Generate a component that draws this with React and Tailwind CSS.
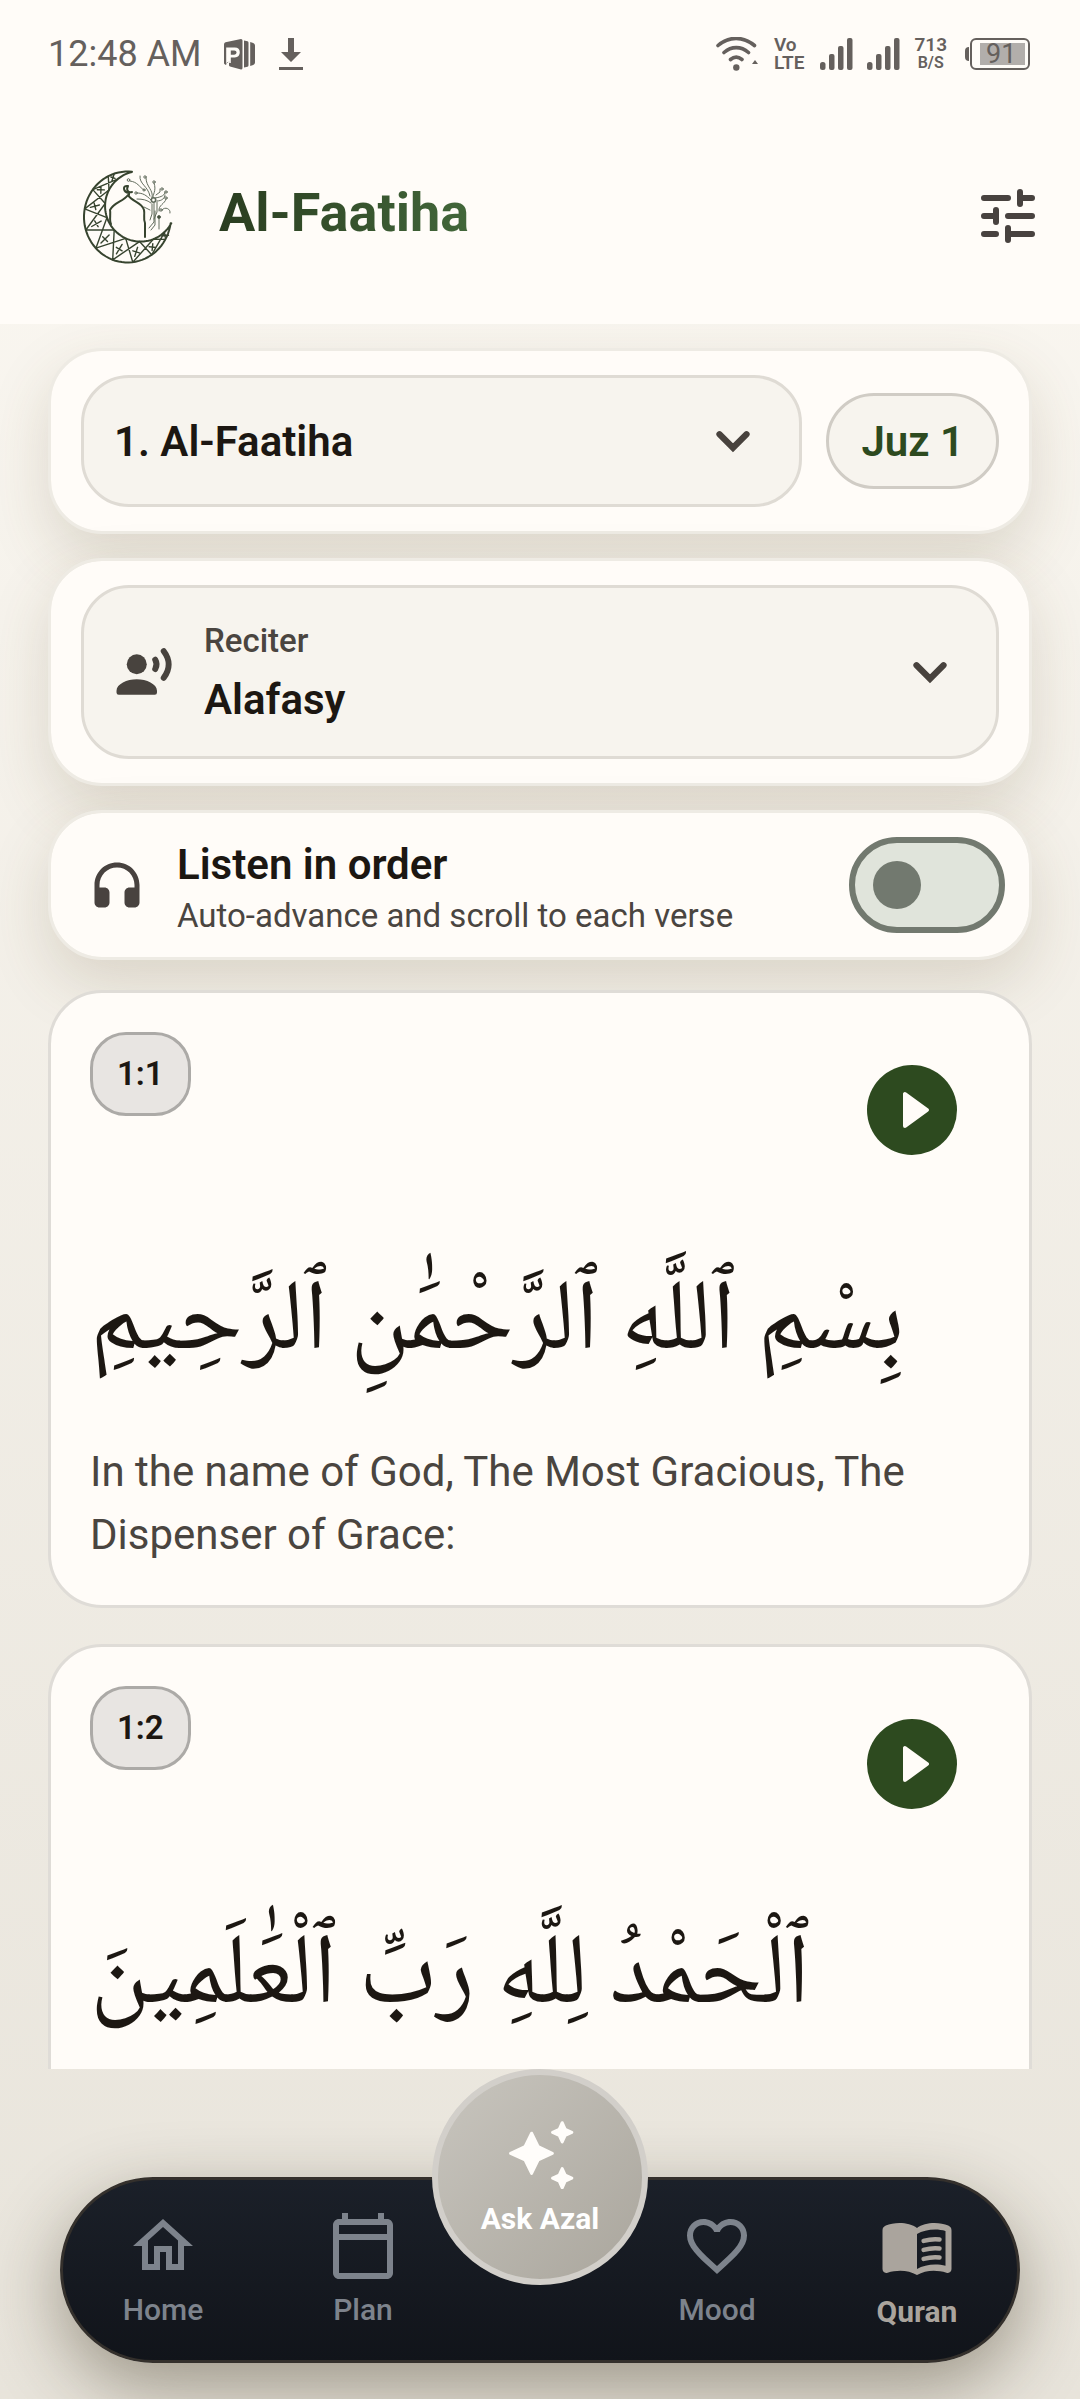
import React from "react";

const surahs = ["1. Al-Faatiha"];
const reciters = ["Alafasy"];

const verses = [
  {
    id: "1:1",
    arabic: "بِسْمِ ٱللَّهِ ٱلرَّحْمَٰنِ ٱلرَّحِيمِ",
    translation: "In the name of God, The Most Gracious, The Dispenser of Grace:",
  },
  { id: "1:2", arabic: "ٱلْحَمْدُ لِلَّهِ رَبِّ ٱلْعَٰلَمِينَ" },
];

function Signal() {
  return (
    <svg viewBox="0 0 33 32" className="h-8 w-[33px]" fill="currentColor" aria-hidden="true">
      <rect x="0" y="24" width="5.5" height="8" rx="2.5" />
      <rect x="9" y="16" width="5.5" height="16" rx="2" />
      <rect x="18" y="8" width="5.5" height="24" rx="2" />
      <rect x="27" y="0" width="5.5" height="32" rx="2" />
    </svg>
  );
}

function StatusBar() {
  return (
    <div className="flex h-[108px] items-center pr-[50px] pl-12 text-[#65605d]">
      <span className="text-4xl">12:48 AM</span>
      <svg viewBox="0 0 31 31" className="ml-[22px] h-[31px] w-[31px]" aria-hidden="true">
        <path fill="currentColor" fillRule="evenodd" d="M17 0q1.500 0 1.500 1.500v27.500q0 1.500-1.500 1.500l-11-3q-1-.3-1-1.200v-3.300h-1.800q-.7 2-1.200 3-1-.5-2-1.500v-19q0-1.600 1.500-2.200zM2.200 8.500v16l3-2V24h1.600v-5.500h4q5-.4 5-5.200 0-4.800-5-4.800zM6.800 11.500h3.400q2.400.2 2.400 2.100 0 2-2.400 2.200H6.800z" />
        <path fill="currentColor" d="M20 1.500l3.500.8q1 .3 1 1.500v22.500q0 1.200-1 1.500l-3.500.8zM26.200 3l3 1q1.800.7 1.800 2.500v17q0 1.800-1.800 2.500l-3 1z" />
      </svg>
      <svg viewBox="0 0 24 32" className="ml-6 h-8 w-6" fill="currentColor" aria-hidden="true">
        <path d="M9 0h6v14h7L12 24 2 14h7zM0 29h24v3H0z" />
      </svg>
      <svg viewBox="0 0 42 34" className="ml-auto h-[34px] w-[42px]" fill="none" stroke="currentColor" strokeWidth="3.600" strokeLinecap="round" aria-hidden="true">
        <path d="M2 8.500C13-1 27-1 38.500 8.500M8 15.500c7.500-6.500 17-6.500 24.500 0M14.500 22.500c3.800-3.200 7.500-3.200 11.500 0" />
        <circle cx="20.300" cy="30.500" r="3.200" fill="currentColor" stroke="none" />
        <path d="M36 27l3-4 3 4z" fill="currentColor" stroke="none" />
      </svg>
      <div className="ml-4 flex flex-col text-[19px] leading-[18px] font-semibold">
        <span>Vo</span>
        <span>LTE</span>
      </div>
      <div className="ml-4 flex gap-3.5">
        <Signal />
        <Signal />
      </div>
      <div className="ml-3.5 flex flex-col items-center font-semibold">
        <span className="text-[19px] leading-[18px]">713</span>
        <span className="text-base leading-[18px]">B/S</span>
      </div>
      <div className="ml-[18px] flex items-center">
        <div className="h-3.5 w-1 rounded-l bg-[#65605d]" />
        <div className="ml-px flex h-8 w-[60px] items-center rounded-md border-2 border-[#65605d]">
          <div className="ml-2 flex h-[22px] w-[45px] items-center bg-[#b2aeab] pl-1.5 text-[27px] leading-none">91</div>
        </div>
      </div>
    </div>
  );
}

/* Crescent geometry: a point on the outer or inner edge at position s (0 = top tip, 1 = right tip). */
const rad = Math.PI / 180;
function outer(s) {
  const a = (-84 - 268 * s) * rad;
  return [57.5 + 43.5 * Math.cos(a), 58 + 45.5 * Math.sin(a)];
}
function inner(s) {
  const a = (-107 - 221 * s) * rad;
  const r = 34.5 + 2.8 * Math.sin(Math.PI * s);
  return [72 + r * Math.cos(a), 46 + r * Math.sin(a)];
}
const line = (p, q) => "M" + p[0].toFixed(1) + " " + p[1].toFixed(1) + "L" + q[0].toFixed(1) + " " + q[1].toFixed(1);
const edge = (f) => Array.from({ length: 61 }, (_, i) => f(i / 60)).map((p, i) => (i ? "L" : "M") + p[0].toFixed(1) + " " + p[1].toFixed(1)).join("");

function lattice() {
  const stops = [0.12, 0.22, 0.32, 0.42, 0.52, 0.62, 0.72, 0.82, 0.92];
  let d = "";
  stops.forEach((s, i) => {
    const next = stops[i + 1];
    if (next) d += line(outer(s), inner(next)) + line(inner(s), outer(next));
    const o = outer(s);
    const n = inner(s);
    const at = (k) => [o[0] + (n[0] - o[0]) * k, o[1] + (n[1] - o[1]) * k];
    const m = at(0.5);
    const len = Math.hypot(n[0] - o[0], n[1] - o[1]);
    const u = [(-(n[1] - o[1]) / len) * 3.4, ((n[0] - o[0]) / len) * 3.4];
    d += line(at(0.28), at(0.72)) + line([m[0] - u[0], m[1] - u[1]], [m[0] + u[0], m[1] + u[1]]);
  });
  return d;
}

function Logo() {
  return (
    <svg viewBox="0 0 120 120" className="mt-1.5 h-[120px] w-[120px]" fill="none" stroke="#37442f" strokeWidth="1.400" strokeLinecap="round" strokeLinejoin="round" role="img" aria-label="Azal">
      <path strokeWidth="2" d={edge(outer) + edge(inner)} />
      <path d={lattice()} />
      <path strokeWidth="2" d="M41 65c-2-4 0-10-1-14 4-8 13-8 18-15 4 7 14 7 16 15 1 5-1 8 1 13v14M59 36v-2c-6-1-7-8-1-7-2 4 0 7 4 6" />
      <g stroke="#626c5d" strokeWidth="1">
        <circle cx="83.500" cy="41" r="2.200" strokeWidth="1.600" />
        <circle cx="58.500" cy="21" r="1.300" />
        <path d="M60 22c8 1 9 6 14 9" />
        <circle cx="74" cy="31" r="1.100" />
        <path d="M70 17c-1 8 8 10 10 20M76 19c0 9 8 12 6 20M84 24c3 8-2 12-1 15M86 36l4-3v-3M85 39c7-1 10-3 10-6M87 42c5 0 8-3 8-6M81 41c-5-5-8-7-14-7M81 44c-4-3-8-4-14-4M84 44v19l-5 6M82 45v10l-2 6M80 51l-6-3M87 43v10l-3 7M96 40c-1 5-8 6-7 12M92 51c3-4 9-1 8 3M81 71l4-5V52" />
        <circle cx="75" cy="18" r="1.200" />
        <circle cx="84" cy="23" r="1.200" />
        <circle cx="92" cy="30" r="1.200" />
        <circle cx="96" cy="33" r="1.200" />
        <circle cx="66" cy="34" r="1.200" />
        <circle cx="96" cy="39" r="1.200" />
        <circle cx="91" cy="51" r="1.200" />
        <path d="M89 58v12" />
        <circle cx="89" cy="58" r="1.500" fill="#37442f" />
      </g>
    </svg>
  );
}

function Chevron() {
  return (
    <svg viewBox="0 0 24 24" className="pointer-events-none h-[60px] w-[60px] shrink-0" fill="none" stroke="#48423d" strokeWidth="2.500" strokeLinecap="round" aria-hidden="true">
      <path d="M6.600 9.300l5.400 5.400 5.400-5.400" />
    </svg>
  );
}

function Panel({ className, children }) {
  return (
    <section className={"flex items-center rounded-[54px] border-[3px] border-[#eeebe4] bg-[#fffcf8] bg-clip-padding shadow-[0_24px_60px_rgba(92,78,44,0.17)] " + className}>
      {children}
    </section>
  );
}

function Verse({ verse }) {
  return (
    <article className="rounded-[54px] border-[3px] border-[#dfdcd7] bg-[#fffcf8] p-[39px]">
      <div className="flex h-[156px] items-start justify-between">
        <span className="flex h-[84px] items-center rounded-[36px] border-[3px] border-[#acaaa7] bg-[#e8e5e2] px-6 text-[33px] font-semibold text-[#1c1712]">{verse.id}</span>
        <button type="button" aria-label={"Play " + verse.id} className="mt-[33px] mr-[33px] flex h-[90px] w-[90px] items-center justify-center rounded-full bg-[#2d4a1f]">
          <svg viewBox="0 0 90 90" className="h-[90px] w-[90px]" fill="#fffcf8" stroke="#fffcf8" strokeWidth="4" strokeLinejoin="round" aria-hidden="true">
            <path d="M38 29v32l22-16z" />
          </svg>
        </button>
      </div>
      <p dir="rtl" lang="ar" className="flex h-[252px] items-center justify-end pt-6 font-['Noto_Naskh_Arabic','Noto_Sans_Arabic',serif] text-[100px] whitespace-nowrap text-[#1c1712]">{verse.arabic}</p>
      {verse.translation && <p className="text-[42px] leading-[63px] text-[#4a4540]">{verse.translation}</p>}
    </article>
  );
}

function NavItem({ label, active, children }) {
  return (
    <a href={"#" + label.toLowerCase()} aria-current={active ? "page" : undefined} className={active ? "flex flex-1 flex-col items-center text-[#aaa49d]" : "flex flex-1 flex-col items-center text-[#7d838c]"}>
      <svg viewBox="0 0 24 24" className="h-[72px] w-[72px] overflow-visible" fill="currentColor" aria-hidden="true">{children}</svg>
      <span className={active ? "mt-3 text-3xl leading-9 font-bold" : "mt-2.5 text-3xl leading-9 font-medium"}>{label}</span>
    </a>
  );
}

export default function App() {
  return (
    <div className="flex h-screen flex-col overflow-hidden bg-linear-to-b from-[#fbf8f2] to-[#e8e4db] font-[Roboto,sans-serif]">
      <header className="shrink-0 bg-[#fffcf8]">
        <StatusBar />
        <div className="flex h-[216px] items-center pr-9 pl-[70px]">
          <Logo />
          <h1 className="ml-[29px] bg-linear-to-r from-[#2a3d20] to-[#42673a] bg-clip-text pb-1.5 text-[54px] leading-[60px] font-bold text-transparent">Al-Faatiha</h1>
          <button type="button" aria-label="Reading settings" className="ml-auto">
            <svg viewBox="0 0 24 24" className="h-[72px] w-[72px]" fill="none" stroke="#48423f" strokeWidth="2" strokeLinecap="round" aria-hidden="true">
              <path d="M4 6h8M17 6h3M16 4v4M4 12h4M12 12h8M8 10v4M4 18h4M12 18h8M12 16v4" />
              <path stroke="#fffcf8" strokeLinecap="butt" d="M14 4v4M10 10v4M10 16v4" />
            </svg>
          </button>
        </div>
      </header>

      <main className="min-h-0 flex-1 overflow-hidden px-12 pt-6">
        <div className="flex flex-col gap-6">
          <Panel className="gap-6 px-[30px] py-6">
            <div className="flex h-[132px] flex-1 items-center rounded-[48px] border-[3px] border-[#dfdbd4] bg-[#f7f4ee] pr-9 pl-[30px]">
              <select aria-label="Surah" className="h-full flex-1 appearance-none bg-transparent text-[42px] font-semibold text-[#1c1712]">
                {surahs.map((s) => <option key={s}>{s}</option>)}
              </select>
              <Chevron />
            </div>
            <button type="button" className="h-24 rounded-full border-[3px] border-[#d0ccc5] bg-[#f7f4ee] px-8 text-[42px] font-semibold text-[#2d4a1f]">Juz 1</button>
          </Panel>

          <Panel className="px-[30px] py-6">
            <div className="flex h-[174px] flex-1 items-center rounded-[48px] border-[3px] border-[#dfdbd4] bg-[#f7f4ee] pr-9 pl-[30px]">
              <svg viewBox="0 0 24 24" className="h-[60px] w-[60px]" fill="#48433e" aria-hidden="true">
                <circle cx="9.100" cy="8.900" r="4" />
                <path d="M9.100 14.900C5.200 14.900 1 16.800 1 19.500v.7q0 .9.900.9h14.400q.9 0 .9-.9v-.7c0-2.700-4.200-4.600-8.100-4.600z" />
                <path fill="none" stroke="#48433e" strokeWidth="2.400" strokeLinecap="round" d="M16.500 7.100c.7 1.200.7 2.500 0 3.700M19.900 3.700c2.600 3.400 2.600 7.200 0 10.600" />
              </svg>
              <div className="ml-[30px] flex flex-1 flex-col gap-0.5">
                <label htmlFor="reciter" className="text-[33px] leading-[54px] font-medium text-[#4a4540]">Reciter</label>
                <select id="reciter" className="appearance-none bg-transparent text-[42px] leading-[60px] font-semibold text-[#1c1712]">
                  {reciters.map((r) => <option key={r}>{r}</option>)}
                </select>
              </div>
              <Chevron />
            </div>
          </Panel>

          <Panel className="h-[150px] pr-6 pl-9">
            <svg viewBox="0 0 24 24" className="h-[60px] w-[60px]" fill="#48423f" aria-hidden="true">
              <path d="M12 3c-5 0-9 4-9 9v7c0 1.100.9 2 2 2h2c1.100 0 2-.9 2-2v-4c0-1.100-.9-2-2-2H5v-1c0-3.900 3.100-7 7-7s7 3.100 7 7v1h-2c-1.100 0-2 .9-2 2v4c0 1.100.9 2 2 2h2c1.100 0 2-.9 2-2v-7c0-5-4-9-9-9z" />
            </svg>
            <label htmlFor="listen" className="ml-[30px] flex flex-1 flex-col pt-2">
              <span className="text-[42px] leading-[54px] font-semibold text-[#1c1712]">Listen in order</span>
              <span className="text-[33px] leading-[48px] text-[#4a4540]">Auto-advance and scroll to each verse</span>
            </label>
            <input id="listen" type="checkbox" role="switch" className="flex h-24 w-[156px] appearance-none items-center rounded-full border-[6px] border-[#72796f] bg-[#e0e4db] pl-[18px] before:h-12 before:w-12 before:rounded-full before:bg-[#72796f] before:content-['']" />
          </Panel>
        </div>

        <div className="relative mt-[30px] flex flex-col gap-9">
          {verses.map((v) => <Verse key={v.id} verse={v} />)}
        </div>
      </main>

      <footer className="shrink-0 px-[60px] pt-[108px] pb-9">
        <nav className="relative flex h-[186px] rounded-full border-[3px] border-[#34302c] bg-linear-to-b from-[#1b2029] to-[#11141a] pt-[30px] shadow-[0_24px_72px_rgba(50,40,20,0.42)]">
          <NavItem label="Home">
            <path d="M12 5.700l5 4.500V18h-2v-6H9v6H7v-7.800zM12 3L2 12h3v8h6v-6h2v6h6v-8h3z" />
          </NavItem>
          <NavItem label="Plan">
            <path d="M20 3h-1V1h-2v2H7V1H5v2H4c-1.100 0-2 .9-2 2v16c0 1.100.9 2 2 2h16c1.100 0 2-.9 2-2V5c0-1.100-.9-2-2-2zm0 18H4V10h16zm0-13H4V5h16z" />
          </NavItem>
          <div className="w-[154px]" />
          <NavItem label="Mood">
            <path d="M16.500 3c-1.740 0-3.410.81-4.500 2.090C10.910 3.810 9.240 3 7.500 3 4.420 3 2 5.420 2 8.500c0 3.780 3.400 6.860 8.550 11.540L12 21.350l1.450-1.320C18.600 15.360 22 12.280 22 8.500 22 5.420 19.580 3 16.500 3zm-4.400 15.550l-.1.100-.1-.1C7.140 14.240 4 11.390 4 8.500 4 6.500 5.500 5 7.500 5c1.540 0 3.040.99 3.570 2.360h1.870C13.460 5.990 14.960 5 16.500 5c2 0 3.500 1.500 3.500 3.500 0 2.890-3.140 5.740-7.900 10.050z" />
          </NavItem>
          <NavItem label="Quran" active>
            <path fillRule="evenodd" d="M12 6C9.500 4 4.500 3.900 1.600 5.200 .8 5.600.5 6 .5 6.800V19.700c0 1 .8 1.500 1.700 1.200 3.300-1 7-.9 9.800.8 2.800-1.700 6.500-1.800 9.800-.8.900.3 1.700-.2 1.700-1.200V6.800c0-.8-.3-1.200-1.100-1.600C19.500 3.900 14.500 4 12 6zM12 19.700V8c2.500-1.500 6.500-2 9.500-1v11.600c-3-.8-7-.5-9.500 1.100z" />
            <path fill="none" stroke="currentColor" strokeWidth="1.500" strokeLinecap="round" d="M14.200 10.300c1.700-.5 3.700-.7 5.300-.5M14.200 13.300c1.700-.5 3.700-.7 5.300-.5M14.200 16.300c1.700-.5 3.700-.7 5.300-.5" />
          </NavItem>
          <button type="button" className="absolute -top-[111px] left-1/2 flex h-[216px] w-[216px] -translate-x-1/2 flex-col items-center justify-center rounded-full border-[6px] border-[#d2cfca] bg-linear-to-br from-[#c8c5be] to-[#aaa69d] text-white">
            <svg viewBox="0 0 24 24" className="h-[72px] w-[72px]" fill="#fffdfa" stroke="#fffdfa" strokeWidth="1" strokeLinejoin="round" aria-hidden="true">
              <path d="M9.200 5.400l2.200 4.500 4.700 2.200-4.700 2.200-2.200 4.500-2.200-4.500-4.800-2.200 4.800-2.200zM19.400 1.900l1 2.200 2.200 1-2.200 1-1 2.200-1-2.200-2.200-1 2.200-1zM19.400 17.200l1 2.200 2.200 1-2.200 1-1 2.200-1-2.200-2.200-1 2.200-1z" />
            </svg>
            <span className="mt-3 text-3xl leading-9 font-bold">Ask Azal</span>
          </button>
        </nav>
      </footer>
    </div>
  );
}
